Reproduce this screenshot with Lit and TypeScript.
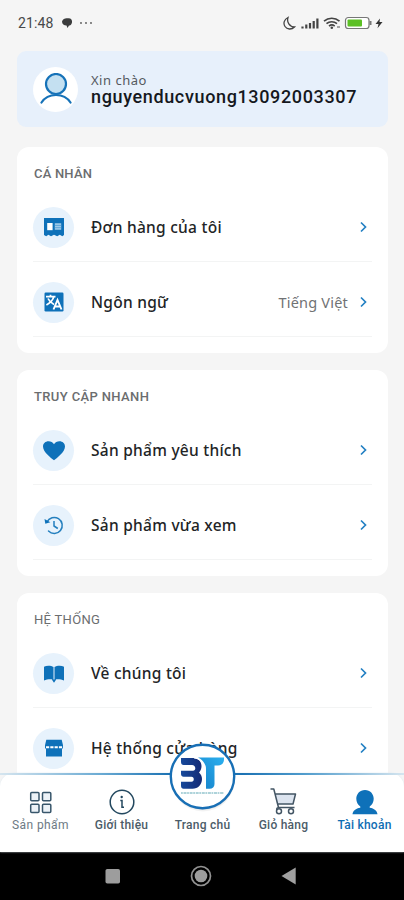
import { LitElement, html, css, svg, nothing } from "lit";
import { customElement, property } from "lit/decorators.js";

const icons: Record<string, unknown> = {
  order: svg`<svg width="20" height="20" viewBox="0 0 20 20"><path fill="#0e71b9" d="M0 1h20v17l-1.700 1.300-2.500-1.600-2.600 1.600-3.200-1.600-3 1.600-2.600-1.600-2.200 1.600L0 18z"/><path fill="#fff" d="M3.200 6h5.400v7.200H3.200z"/><path fill="#9fcbea" d="M10.800 6.200h6.400v6.600h-6.400z"/><path stroke="#4b98d0" stroke-width=".8" d="M10.800 8.400h6.400M10.800 10.700h6.400"/></svg>`,
  lang: svg`<svg width="20" height="20" viewBox="0 0 20 20"><rect x=".5" y=".5" width="19" height="19" rx="1.200" fill="#0e71b9"/><path fill="none" stroke="#fff" stroke-width="1.700" d="M2 4.600h9.500M6.500 2.800v1.800M9.800 4.800C8.800 8.500 6 11 2.400 13M4 6.500c1.200 2.700 3.200 4.500 6 6"/><path fill="none" stroke="#fff" stroke-width="1.900" d="M9.500 17.500 13.500 8l4 9.500M11 14.500h5.200"/></svg>`,
  heart: svg`<svg width="22" height="22" viewBox="0 0 22 22"><path fill="#0e71b9" d="M11 21.200C8 19 0 13 0 7.500 0 4.300 2.500 2.200 5.500 2.200c2.400 0 4.400 1.200 5.500 3 1.100-1.800 3.100-3 5.500-3 3 0 5.500 2.100 5.500 5.300 0 5.500-8 11.500-11 13.700z"/></svg>`,
  history: svg`<svg width="20" height="20" viewBox="0 0 20 20"><path fill="none" stroke="#247fbe" stroke-width="1.500" d="M3 7A8 8 0 1 1 4.500 16" stroke-linecap="round"/><path fill="#0e71b9" d="M.5 4 1.300 8.800 6.300 7.300z"/><path fill="none" stroke="#247fbe" stroke-width="1.500" d="M10 6v5l3.800 2.500"/></svg>`,
  book: svg`<svg width="20" height="19" viewBox="0 0 20 19"><path fill="#0e71b9" d="M0 2.700C2.500 1.500 7 1.500 9.500 3v12.800C7 15 3 15.200 0 16.600zM10.500 3C13 1.500 17.500 1.500 20 2.700v13.900c-3-1.400-7-1.600-9.500-.800zM7.800 15.600h4.400L10 18.700z"/></svg>`,
  store: svg`<svg width="20" height="18" viewBox="0 0 20 18"><path fill="#0e71b9" d="M2.300.800h15.400L19 6.200v3.300H1V6.200zM2 9h16v8.500H2z"/><path fill="none" stroke="#fff" stroke-width="2" stroke-dasharray="3.200 1.100" d="M2 8.300h16.500"/></svg>`,
  grid: svg`<svg width="24" height="24" viewBox="0 0 24 24"><g fill="#edf3f8" stroke="#38566b" stroke-width="1.500"><rect x="1.700" y="1.400" width="8.300" height="8.300" rx="1"/><rect x="13.500" y="1.400" width="8.300" height="8.300" rx="1"/><rect x="1.700" y="13.200" width="8.300" height="8.300" rx="1"/><rect x="13.500" y="13.200" width="8.300" height="8.300" rx="1"/></g></svg>`,
  info: svg`<svg width="26" height="26" viewBox="0 0 26 26"><circle cx="13" cy="13" r="11.800" fill="#fff" stroke="#23485f" stroke-width="1.500"/><circle cx="12.700" cy="8" r="1.200" fill="#23485f"/><path fill="none" stroke="#23485f" stroke-width="1.500" d="M11.300 11.500H13v6.700h2"/></svg>`,
  cart: svg`<svg width="27" height="27" viewBox="0 0 27 27"><path fill="#dce4ef" d="M5 6h20l-2.500 10H7z"/><path fill="none" stroke="#435564" stroke-width="1.500" stroke-linejoin="round" d="M.5 1h3.300l4.700 18.500h16M5 6h20.500L23 16H7.700M8.500 19.500C6 20 6.500 22 7.500 22.500"/><circle cx="9" cy="23.300" r="2.500" fill="#fff" stroke="#435564" stroke-width="1.500"/><circle cx="21" cy="23.300" r="2.500" fill="#fff" stroke="#435564" stroke-width="1.500"/></svg>`,
  user: svg`<svg width="26" height="26" viewBox="0 0 26 26"><path fill="#0e71b9" d="M13 1c5.200 0 8.700 4 8.700 8.800 0 3.200-1.500 6.300-4 7.700v1.300c4.500.700 7.300 3 7.800 6.400H.500c.500-3.400 3.300-5.700 7.800-6.400v-1.300c-2.500-1.400-4-4.500-4-7.700C4.300 5 7.800 1 13 1z"/></svg>`,
};

@customElement("menu-row")
class MenuRow extends LitElement {
  @property() icon = "";
  @property() label = "";
  @property() value = "";
  static styles = css`
    :host { display: block; height: 75px; box-sizing: border-box; border-bottom: 1px solid #f3f4f4; padding-top: 6px; }
    .row { height: 68px; display: flex; align-items: center; }
    .disc { width: 41px; height: 41px; border-radius: 50%; background: #e7f2fc; display: flex; align-items: center; justify-content: center; margin-right: 17px; }
    .label { flex: 1; font: 500 15.5px/22px "Noto Sans", sans-serif; letter-spacing: .26px; color: #222426; white-space: nowrap; }
    .value { font: 14.5px/22px "Noto Sans", sans-serif; letter-spacing: .2px; color: #707274; margin-right: 12px; white-space: nowrap; }
    .chev { margin-right: 5px; }
    svg { display: block; }
  `;
  render() {
    return html`<div class="row"><div class="disc">${icons[this.icon]}</div><span class="label">${this.label}</span>${this.value ? html`<span class="value">${this.value}</span>` : nothing}
      <svg class="chev" width="7" height="12" viewBox="0 0 7 12"><path d="M1 1.500 5.500 6 1 10.500" fill="none" stroke="#2380c3" stroke-width="1.700"/></svg></div>`;
  }
}

const sections = [
  { title: "CÁ NHÂN", cls: "t1", rows: [["order", "Đơn hàng của tôi", ""], ["lang", "Ngôn ngữ", "Tiếng Việt"]] },
  { title: "TRUY CẬP NHANH", cls: "t2", rows: [["heart", "Sản phẩm yêu thích", ""], ["history", "Sản phẩm vừa xem", ""]] },
  { title: "HỆ THỐNG", cls: "t3", rows: [["book", "Về chúng tôi", ""], ["store", "Hệ thống cửa hàng", ""]] },
];

const tabs = [
  ["grid", "Sản phẩm", "soft"],
  ["info", "Giới thiệu", ""],
  ["", "Trang chủ", ""],
  ["cart", "Giỏ hàng", ""],
  ["user", "Tài khoản", "active"],
];

@customElement("app-root")
class AppRoot extends LitElement {
  static styles = css`
    :host { display: flex; flex-direction: column; height: 900px; width: 404px; background: #f5f5f5; overflow: hidden; font-family: Roboto, sans-serif; }
    svg { display: block; }
    .status { height: 51px; flex: none; display: flex; align-items: flex-start; padding: 14px 20px 0 18px; box-sizing: border-box; color: #48494a; }
    .time { font-size: 14px; line-height: 19px; width: 43px; letter-spacing: .1px; }
    .grow { flex: 1; }
    .content { flex: 1; min-height: 0; overflow: hidden; padding: 0 16px 0 17px; }
    .hello { height: 76px; border-radius: 9px; background: #e7f0fb; display: flex; align-items: center; padding-left: 16px; margin-bottom: 20px; }
    .avatar { width: 45px; height: 45px; border-radius: 50%; background: #fff; display: flex; align-items: center; justify-content: center; margin-right: 13px; }
    .hi { font: 13px/16px "Noto Sans", sans-serif; color: #55595f; letter-spacing: .5px; }
    .name { font-size: 18px; line-height: 18px; font-weight: 500; color: #15181d; letter-spacing: .64px; }
    .card { background: #fff; border-radius: 12px; height: 206px; margin-bottom: 17px; padding: 15px 16px 0 16px; box-sizing: border-box; }
    .title { font-size: 13px; font-weight: 500; line-height: 24px; height: 25px; color: #6b6d6f; white-space: nowrap; padding-left: 1px; }
    .t1 { letter-spacing: .2px; }
    .t2 { letter-spacing: .37px; }
    .t3 { letter-spacing: .3px; font-weight: 400; }
    .tabs { position: relative; flex: none; height: 79px; display: flex; background: #fff; border-radius: 14px 14px 0 0; box-shadow: 0 0 2px #dde8f0; }
    .line { position: absolute; left: 0; right: 0; top: 0; height: 2px; background: linear-gradient(90deg, #d5e5ef, #6aaad3 25%, #1c72b3 42%, #1c72b3 60%, #4f9bcc 75%, #d5e5ef); }
    .tab { width: 81px; flex: none; display: flex; flex-direction: column; align-items: center; color: #4c5c68; }
    .pic { height: 42px; display: flex; align-items: flex-end; justify-content: center; }
    .tab span { font-size: 12px; line-height: 17px; font-weight: 500; white-space: nowrap; letter-spacing: .25px; margin-top: 2px; }
    .tab.soft span { font-weight: 400; letter-spacing: .4px; }
    .soft { color: #6d7a84; }
    .active { color: #0e6db3; }
    .logo { position: absolute; left: 169px; top: -30px; }
    .nav { height: 48px; flex: none; background: #000; display: flex; align-items: center; }
    .nav svg { width: 404px; height: 48px; }
  `;

  render() {
    return html`
      <div class="status">
        <span class="time">21:48</span>
        <svg width="32" height="19" viewBox="0 0 32 19"><path fill="#3b3c3d" d="M1 7.500C2 4 5 4 7 4.300c3-.300 4.500 2 4 4.200C10.500 11 9 11.500 8 11.500L6.500 14 5.500 11.500C3 11.500 1 10 1 7.500z"/><g fill="#555"><circle cx="20" cy="9" r=".9"/><circle cx="25" cy="9" r=".9"/><circle cx="30" cy="9" r=".9"/></g></svg>
        <div class="grow"></div>
        <svg width="101" height="19" viewBox="0 0 101 19">
          <path fill="none" stroke="#444" stroke-width="1.300" d="M5 3.500C1 5.500 0 9.500 2 12.500s6.500 3.500 9.500.500C6.500 13 3.500 8 5 3.500z"/>
          <path stroke="#444" stroke-width="2.200" d="M19.500 14.500v-2M23.300 14.500v-4M27 14.500V9M30.700 14.500V7M34.400 14.500V4.500"/>
          <path fill="none" stroke="#444" stroke-width="1.600" d="M41 7.200c4.500-4 11-4 15.500 0M43.500 9.700c3-2.700 7.500-2.700 10.500 0M46 12.200c1.700-1.500 4-1.500 5.700 0"/><circle cx="48.800" cy="13.800" r="1.300" fill="#444"/><path stroke="#777" stroke-width="1.300" d="M54 13h3"/>
          <rect x="62.500" y="3.500" width="23.500" height="11" rx="2.800" fill="#fff" stroke="#777" stroke-width="1.200"/><rect x="64.500" y="5.500" width="14.500" height="7" rx="1" fill="#5cc025"/><path stroke="#777" stroke-width="2" d="M87.500 7v4"/>
          <path fill="#333" d="M97 4.500 92.500 10h3l-1 4.300L99.500 8h-3z"/>
        </svg>
      </div>
      <div class="content">
        <div class="hello">
          <div class="avatar"><svg width="32" height="32" viewBox="0 0 32 32"><g stroke="#1672b8" stroke-width="2.200"><circle cx="16" cy="11" r="10" fill="#c4e0f1"/><path fill="none" stroke-linecap="round" d="M1.500 29.500C8 19.500 24 19.500 30.500 29.500"/></g></svg></div>
          <div><div class="hi">Xin chào</div><div class="name">nguyenducvuong13092003307</div></div>
        </div>
        ${sections.map((s) => html`<div class="card"><div class="title ${s.cls}">${s.title}</div>
          ${s.rows.map(([i, l, v]) => html`<menu-row .icon=${i} .label=${l} .value=${v}></menu-row>`)}</div>`)}
      </div>
      <div class="tabs">
        <div class="line"></div>
        ${tabs.map(([i, l, c]) => html`<div class="tab ${c}"><div class="pic">${i ? icons[i] : nothing}</div><span>${l}</span></div>`)}
        <svg class="logo" width="68" height="72" viewBox="0 0 68 72">
          <defs><linearGradient id="b" x1="0" x2="1"><stop offset="0" stop-color="#17499b"/><stop offset="1" stop-color="#142a75"/></linearGradient><linearGradient id="t" x1="1" y1="0" x2="0" y2="1"><stop offset="0" stop-color="#2bb0ef"/><stop offset="1" stop-color="#1580c8"/></linearGradient></defs>
          <circle cx="34" cy="37" r="31.500" fill="#000" opacity=".05"/><circle cx="34" cy="35.500" r="31.500" fill="#000" opacity=".07"/>
          <circle cx="33.500" cy="33.500" r="31.700" fill="#fff" stroke="#186fb5" stroke-width="2.400"/>
          <path fill="url(#b)" d="M12 15h12c5 0 8.500 3.500 8.500 8 0 3-1 5-2.500 6.500 2 1.800 3 4 3 6.500 0 5.500-4 9.800-9.500 9.800H14.500c-1.500 0-2.500-1.300-2.500-3v-4h10.500c3 0 3-5 0-5h-8C13 33.800 12 32.500 12 31v-3.200h12c1.500 0 2.300-.900 2.300-2.500S25 22 23 22h-8.500c-1.500 0-2.500-1.300-2.500-3z"/>
          <path fill="none" stroke="#fff" stroke-width="1.200" d="M25 14.800c5.500.500 9 4 9 9 0 2.500-.800 4.500-2.500 6"/>
          <path fill="url(#t)" d="M29 14.500h26v2c0 3.500-2.300 6-6 6h-3.500V41c0 3-2 4.800-5 4.800H37V27c0-2.500 0-3.500-.800-5C34.800 18.500 32.500 16 29 14.500z"/>
          <path stroke="#4d9fae" stroke-width="1.300" stroke-dasharray="1.800 .700 3 .600" opacity=".6" d="M12 50h43"/>
        </svg>
      </div>
      <div class="nav"><svg viewBox="0 0 404 48"><rect x="105.500" y="17" width="14.500" height="14.500" rx="1.800" fill="#9d9d9d"/><circle cx="201" cy="24" r="9.500" fill="none" stroke="#929292" stroke-width="1.700"/><circle cx="201" cy="24" r="6.300" fill="#9d9d9d"/><path fill="#a0a0a0" d="M281.500 24 295.700 15.500v17z"/></svg></div>
    `;
  }
}
